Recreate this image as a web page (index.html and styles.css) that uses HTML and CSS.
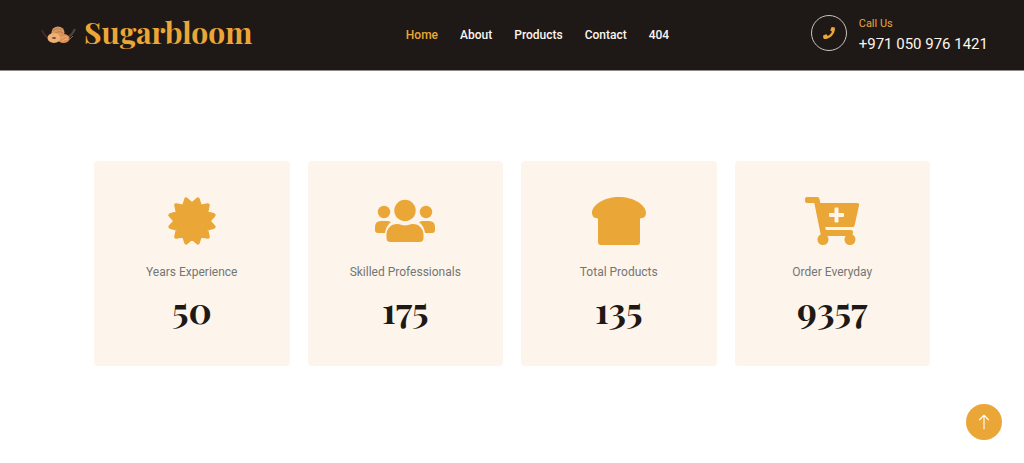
FILE: index.html
```
<!DOCTYPE html>
<html lang="en">
<head>
    <meta charset="UTF-8">
    <meta name="viewport" content="width=device-width, initial-scale=1.0">
    <title>Sugarbloom</title>
    <link rel="stylesheet" href="styles.css">
</head>
<body>
    <header class="navbar">
        <a href="#" class="brand">
            <svg class="brand-logo" viewBox="0 0 36 18" aria-hidden="true">
                <path d="M1 4q2 6 8 9" stroke="#402b2a" stroke-width="2" fill="none"/>
                <path d="M34 3q-3 7-11 11" stroke="#54403e" stroke-width="2" fill="none"/>
                <path d="M32 10q-3 4-7 5" stroke="#77655e" fill="none"/>
                <ellipse cx="17" cy="6.500" rx="6.500" ry="6" fill="#d99862"/>
                <path d="M12 5q4-4 9-1M13 8q5-4 9-1" stroke="#c07a4a" fill="none"/>
                <ellipse cx="22.500" cy="12.500" rx="6" ry="4.500" fill="#d98f55"/>
                <path d="M20 12q4-3 7 0M21 15q3-2 6-2" stroke="#eeb074" fill="none"/>
                <ellipse cx="13" cy="12" rx="6.500" ry="5" fill="#eeb074"/>
                <ellipse cx="13" cy="12" rx="2" ry="1" fill="#7a4a2c"/>
            </svg>
            <span class="brand-name">Sugarbloom</span>
        </a>

        <nav class="nav-links">
            <a href="#" class="active">Home</a>
            <a href="#">About</a>
            <a href="#">Products</a>
            <a href="#">Contact</a>
            <a href="#">404</a>
        </nav>

        <div class="call">
            <div class="call-icon">
                <svg viewBox="0 0 512 512" aria-hidden="true">
                    <path d="M493.4 24.6l-104-24c-11.3-2.600-22.900 3.300-27.500 13.900l-48 112c-4.200 9.800-1.400 21.300 6.900 28l60.600 49.600c-36 76.700-98.900 140.500-177.200 177.200l-49.600-60.600c-6.800-8.300-18.200-11.100-28-6.900l-112 48C3.900 366.500-2 378.100.6 389.400l24 104C27.100 504.200 36.700 512 48 512c256.100 0 464-207.500 464-464 0-11.200-7.700-20.900-18.600-23.400z"/>
                </svg>
            </div>
            <div class="call-text">
                <p class="call-label">Call Us</p>
                <p class="call-number">+971 050 976 1421</p>
            </div>
        </div>
    </header>

    <main class="facts">
        <div class="fact">
            <svg class="fact-icon" viewBox="-24 -24 48 48" aria-hidden="true">
                <path stroke="currentColor" stroke-width="4" stroke-linejoin="round" d="M0-16.500L5.800-21.600 8.200-14.200 15.800-15.800 14.200-8.200 21.600-5.800 16.500 0 21.600 5.800 14.200 8.200 15.800 15.800 8.200 14.200 5.800 21.600 0 16.500-5.800 21.600-8.200 14.200-15.800 15.800-14.200 8.200-21.600 5.800-16.500 0-21.600-5.800-14.200-8.200-15.800-15.800-8.200-14.200-5.800-21.600z"/>
            </svg>
            <p class="fact-label">Years Experience</p>
            <h2 class="fact-value">50</h2>
        </div>
        <div class="fact">
            <svg class="fact-icon" viewBox="0 0 60 48" aria-hidden="true">
                <circle cx="30" cy="13.500" r="10.700"/>
                <circle cx="9" cy="15" r="6.200"/>
                <circle cx="51" cy="15" r="6.200"/>
                <path d="M6 24h6q2 0 4 1-5 4-6 11H3q-3 0-3-3v-3q0-6 6-6z"/>
                <path d="M54 24h-6q-2 0-4 1 5 4 6 11h7q3 0 3-3v-3q0-6-6-6z"/>
                <path d="M22 27q3 0 4 .7 4 1.600 8 0 1-.7 4-.7c6 0 10.500 5 10.500 10.500V41q0 4-4 4h-29q-4 0-4-4v-3.500C11.500 32 16 27 22 27z"/>
            </svg>
            <p class="fact-label">Skilled Professionals</p>
            <h2 class="fact-value">175</h2>
        </div>
        <div class="fact">
            <svg class="fact-icon" viewBox="0 0 54 48" aria-hidden="true">
                <path d="M27 0C12 0 0 8 0 16q0 5 6 5.500V45q0 3 3 3h36q3 0 3-3V21.500q6-.5 6-5.500C54 8 42 0 27 0z"/>
            </svg>
            <p class="fact-label">Total Products</p>
            <h2 class="fact-value">135</h2>
        </div>
        <div class="fact">
            <svg class="fact-icon" viewBox="0 0 54 48" aria-hidden="true">
                <path fill-rule="evenodd" d="M2 0h10.500q1.500 0 2 2l.8 4H52q2.500 0 2 2.500l-4.400 20q-.4 1.500-2 1.500H20.300l.6 3H46q2.500 0 2 2.500l-.6 2.500q-.4 1-2 1H16L9.300 6H2Q0 6 0 4V2q0-2 2-2zM30.500 10.500q-1 0-1 1V16H25q-1 0-1 1v2q0 1 1 1h4.500v4.500q0 1 1 1h2q1 0 1-1V20H38q1 0 1-1v-2q0-1-1-1h-4.500v-4.500q0-1-1-1z"/>
                <circle cx="18" cy="42.500" r="5.500"/>
                <circle cx="45" cy="42.500" r="5.500"/>
            </svg>
            <p class="fact-label">Order Everyday</p>
            <h2 class="fact-value">9357</h2>
        </div>
    </main>

    <button type="button" class="back-to-top" aria-label="Back to top">
        <svg viewBox="0 0 16 16" aria-hidden="true">
            <path d="M8 14V2M4 6l4-4 4 4"/>
        </svg>
    </button>
</body>
</html>
```
FILE: styles.css
```
* {
    box-sizing: border-box;
}
body {
    margin: 0;
    background: #fff;
    color: #757575;
    font-family: Roboto, Arial, sans-serif;
    font-size: 12px;
    line-height: 18px;
}
p, h2 {
    margin: 0;
}
a {
    text-decoration: none;
}
svg {
    display: block;
    fill: currentColor;
}

/* Header */
.navbar {
    display: flex;
    justify-content: space-between;
    align-items: center;
    min-height: 71px;
    padding: 0 36px 0 41px;
    background: #1e1916;
    border-bottom: 1px solid #8f8a87;
}
.brand {
    display: flex;
    align-items: center;
    gap: 7px;
    margin-right: 12px;
    color: #eaa636;
}
.brand-logo {
    width: 36px;
    height: 18px;
}
.brand-name {
    padding-bottom: 6px;
    font-family: "Playfair Display", "Liberation Serif", serif;
    font-size: 30px;
    font-weight: 700;
    line-height: 40px;
}
.nav-links {
    display: flex;
    gap: 22px;
}
.nav-links a {
    color: #fdf5eb;
    font-weight: 500;
}
.nav-links a.active {
    color: #eaa636;
}
.call {
    display: flex;
    align-items: flex-start;
    gap: 12px;
}
.call-icon {
    display: grid;
    place-items: center;
    width: 36px;
    height: 36px;
    border: 1px solid #c9c4be;
    border-radius: 50%;
    color: #eaa636;
}
.call-icon svg {
    width: 12px;
    height: 12px;
}
.call-label {
    color: #eaa636;
    font-size: 11px;
}
.call-number {
    color: #fdf5eb;
    font-size: 15px;
    line-height: 22px;
}

/* Facts */
.facts {
    display: grid;
    grid-template-columns: repeat(4, 1fr);
    gap: 18px;
    max-width: 836px;
    margin: 0 auto;
    padding: 90px 0;
}
.fact {
    display: flex;
    flex-direction: column;
    align-items: center;
    padding: 36px 18px 39px;
    background: #fdf5eb;
    border-radius: 4px;
}
.fact-icon {
    height: 48px;
    color: #eaa636;
}
.fact-label {
    margin: 18px 0 10px;
}
.fact-value {
    color: #1e1916;
    font-family: "Playfair Display", "Liberation Serif", serif;
    font-size: 36px;
    font-weight: 700;
    line-height: 36px;
}

.back-to-top {
    position: fixed;
    right: 22px;
    bottom: 23px;
    display: grid;
    place-items: center;
    width: 36px;
    height: 36px;
    padding: 0;
    border: 0;
    border-radius: 50%;
    background: #eaa636;
    color: #fff;
    cursor: pointer;
}
.back-to-top svg {
    width: 18px;
    height: 18px;
    fill: none;
    stroke: currentColor;
    stroke-linecap: round;
    stroke-linejoin: round;
}
```
